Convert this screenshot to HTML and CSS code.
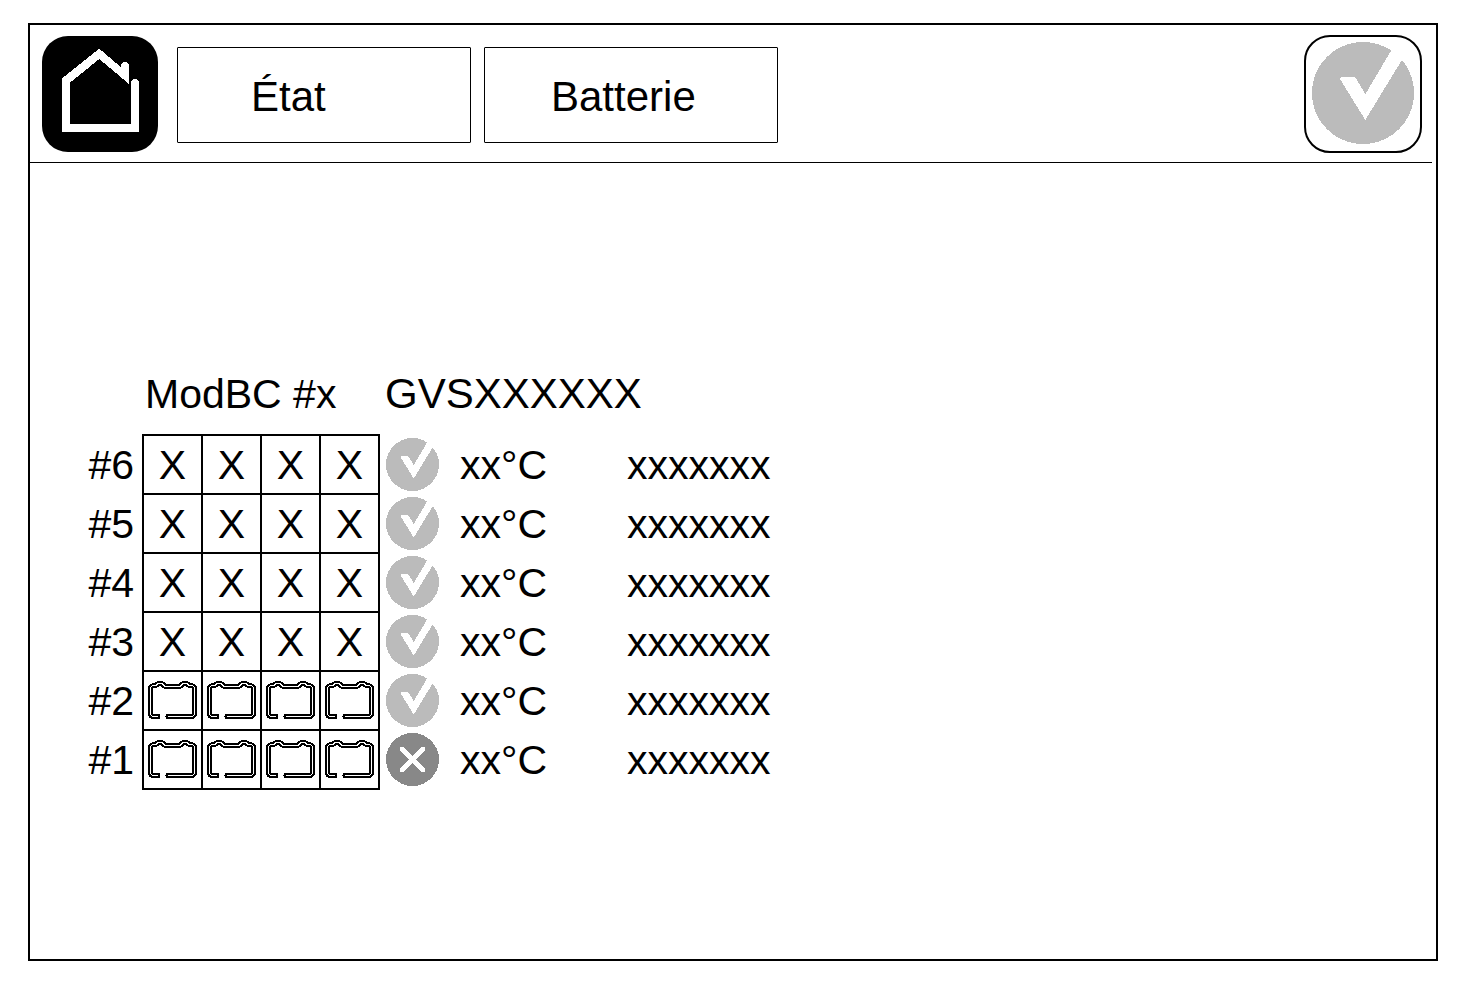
FILE: index.html
```
<!DOCTYPE html>
<html lang="fr">

<head>
    <meta charset="UTF-8">
    <title>État - Batterie</title>
    <link rel="stylesheet" href="styles.css">
</head>

<body>
    <svg class="sprites" aria-hidden="true">
        <symbol id="ok" viewBox="0 0 102 102">
            <circle cx="51" cy="51" r="51" fill="#bbb" />
            <path fill="#fff" d="M28 37 L30 34.5 H42 L44 36.3 L53.3 52.3 L79.3 8.3 L82 4 L94 11 L89.7 18.3 L53.3 78 Z" />
        </symbol>
        <symbol id="fault" viewBox="0 0 53 53">
            <circle cx="26.5" cy="26.5" r="26.5" fill="#888" />
            <path fill="none" stroke="#fff" stroke-width="4.8" stroke-linecap="round" d="M16 16 L37 37 M37 16 L16 37" />
        </symbol>
        <symbol id="battery" viewBox="0 0 50 39">
            <g fill="none" stroke-linecap="round" stroke-linejoin="round">
                <path stroke="#000" stroke-width="5" d="M10 35.5 H6 Q2.5 35.5 2.5 32 V8 Q2.5 5 6 4.5 H8 L10 2.5 H14 L17 5.5 H32 L35 2.5 H39 L41 4.5 H43 Q46.5 5 46.5 8 V32 Q46.5 35.5 43 35.5 H20" />
                <path stroke="#fff" stroke-width="1" d="M10 35.5 H6 Q2.5 35.5 2.5 32 V8 Q2.5 5 6 4.5 H8 L10 2.5 H14 L17 5.5 H32 L35 2.5 H39 L41 4.5 H43 Q46.5 5 46.5 8 V32 Q46.5 35.5 43 35.5 H20" />
            </g>
        </symbol>
    </svg>

    <div class="screen">
        <header class="topbar">
            <button type="button" class="home" aria-label="Accueil">
                <svg viewBox="0 0 116 116">
                    <path fill="#fff" d="M57.3 12.7 L79 31.3 V30 a4 4 0 0 1 8 0 V48 L57.3 23 L28 46.7 V88 H89 V47 a4 4 0 0 1 8 0 V96 H20 V42.3 Z" />
                </svg>
            </button>
            <nav class="tabs">
                <button type="button" class="tab tab-status">État</button>
                <button type="button" class="tab tab-battery">Batterie</button>
            </nav>
            <button type="button" class="alarm" aria-label="Alarmes">
                <svg><use href="#ok" /></svg>
            </button>
        </header>

        <main>
            <table class="batteries">
                <colgroup>
                    <col class="col-label">
                    <col class="col-slot" span="4">
                    <col class="col-state">
                    <col class="col-temp">
                    <col class="col-serial">
                </colgroup>
                <thead>
                    <tr>
                        <td></td>
                        <th colspan="4" scope="colgroup" class="module">ModBC #x</th>
                        <th colspan="3" scope="colgroup" class="cabinet">GVSXXXXXX</th>
                    </tr>
                </thead>
                <tbody>
                    <tr>
                        <th scope="row">#6</th>
                        <td class="slot">X</td>
                        <td class="slot">X</td>
                        <td class="slot">X</td>
                        <td class="slot">X</td>
                        <td class="state"><svg><use href="#ok" /></svg></td>
                        <td>xx°C</td>
                        <td>xxxxxxx</td>
                    </tr>
                    <tr>
                        <th scope="row">#5</th>
                        <td class="slot">X</td>
                        <td class="slot">X</td>
                        <td class="slot">X</td>
                        <td class="slot">X</td>
                        <td class="state"><svg><use href="#ok" /></svg></td>
                        <td>xx°C</td>
                        <td>xxxxxxx</td>
                    </tr>
                    <tr>
                        <th scope="row">#4</th>
                        <td class="slot">X</td>
                        <td class="slot">X</td>
                        <td class="slot">X</td>
                        <td class="slot">X</td>
                        <td class="state"><svg><use href="#ok" /></svg></td>
                        <td>xx°C</td>
                        <td>xxxxxxx</td>
                    </tr>
                    <tr>
                        <th scope="row">#3</th>
                        <td class="slot">X</td>
                        <td class="slot">X</td>
                        <td class="slot">X</td>
                        <td class="slot">X</td>
                        <td class="state"><svg><use href="#ok" /></svg></td>
                        <td>xx°C</td>
                        <td>xxxxxxx</td>
                    </tr>
                    <tr>
                        <th scope="row">#2</th>
                        <td class="slot"><svg><use href="#battery" /></svg></td>
                        <td class="slot"><svg><use href="#battery" /></svg></td>
                        <td class="slot"><svg><use href="#battery" /></svg></td>
                        <td class="slot"><svg><use href="#battery" /></svg></td>
                        <td class="state"><svg><use href="#ok" /></svg></td>
                        <td>xx°C</td>
                        <td>xxxxxxx</td>
                    </tr>
                    <tr>
                        <th scope="row">#1</th>
                        <td class="slot"><svg><use href="#battery" /></svg></td>
                        <td class="slot"><svg><use href="#battery" /></svg></td>
                        <td class="slot"><svg><use href="#battery" /></svg></td>
                        <td class="slot"><svg><use href="#battery" /></svg></td>
                        <td class="state"><svg><use href="#fault" /></svg></td>
                        <td>xx°C</td>
                        <td>xxxxxxx</td>
                    </tr>
                </tbody>
            </table>
        </main>
    </div>
</body>

</html>
```
FILE: styles.css
```
* {
    box-sizing: border-box;
}

body {
    margin: 0;
    padding: 23px 27px 23px 28px;
    background-color: #fff;
    color: #000;
    font-family: "Liberation Sans", Arial, sans-serif;
    font-size: 41px;
}

svg {
    display: block;
    shape-rendering: crispEdges;
}

.sprites {
    display: none;
}

.screen {
    min-height: calc(100vh - 46px);
    border: 2px solid #000;
}

.topbar {
    display: flex;
    align-items: center;
    margin-right: 4px;
    padding: 10px 10px 9px 12px;
    border-bottom: 1px solid #000;
}

button {
    padding: 0;
    background-color: #fff;
    color: #000;
    font-family: inherit;
    cursor: pointer;
}

.home {
    width: 116px;
    height: 116px;
    border: none;
    border-radius: 26px;
    background-color: #000;
}

.tabs {
    display: flex;
    gap: 13px;
    margin-left: 19px;
    padding-top: 2px;
}

.tab {
    width: 294px;
    height: 96px;
    padding-top: 4px;
    border: 1px solid #000;
    border-radius: 1px;
    font-size: 42px;
    text-align: left;
}

.tab-status {
    padding-left: 73px;
}

.tab-battery {
    padding-left: 66px;
}

.alarm {
    width: 118px;
    height: 118px;
    margin-left: auto;
    padding: 4px 6px 6px;
    border: 2px solid #000;
    border-radius: 26px;
}

.alarm svg {
    width: 102px;
    height: 102px;
}

main {
    padding: 190px 57px 0;
}

.batteries {
    table-layout: fixed;
    width: 609px;
    border-collapse: collapse;
}

.col-label {
    width: 56px;
}

.col-slot {
    width: 59px;
}

.col-state {
    width: 81px;
}

.col-temp {
    width: 167px;
}

.batteries tr {
    height: 59px;
}

.batteries thead tr {
    height: 82px;
}

.batteries td,
.batteries th {
    padding: 0;
    font-weight: normal;
    line-height: 48px;
    text-align: left;
    white-space: nowrap;
}

.batteries th[scope="row"] {
    padding-right: 8px;
    text-align: right;
}

.batteries .module {
    padding-left: 2px;
}

.batteries .cabinet {
    padding-left: 6px;
    font-size: 42px;
}

.batteries .slot {
    border: 2px solid #000;
    text-align: center;
}

.slot svg {
    width: 50px;
    height: 39px;
    margin: 0 auto;
}

.batteries .state {
    padding-left: 6px;
}

.state svg {
    width: 53px;
    height: 53px;
}
```
